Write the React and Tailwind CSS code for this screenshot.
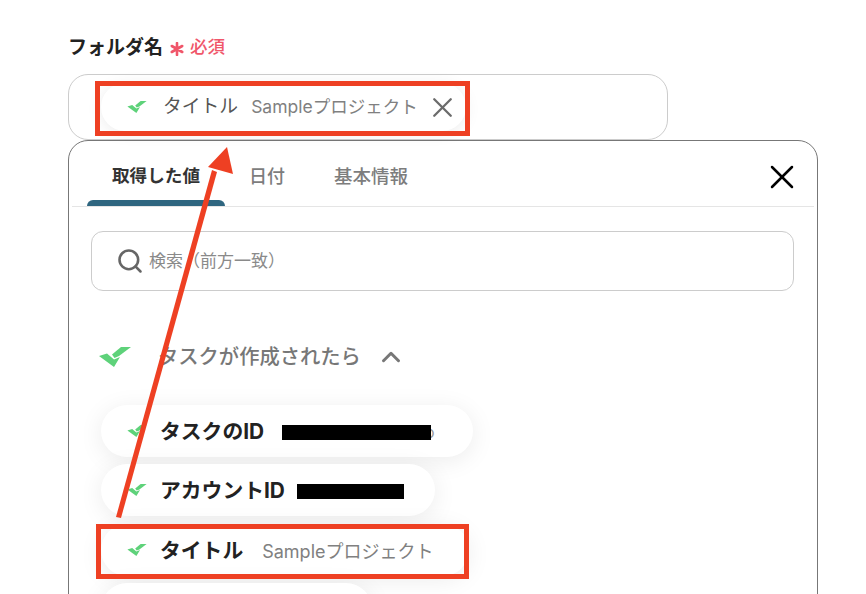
import { Search, X, ChevronUp } from 'lucide-react';

function Check({ className }) {
  return (
    <svg className={className} viewBox="0 0 32 20" fill="#5ed27a">
      <path d="M0 9 L8 6.5 L15 12.5 L21 10 L15 20 Z" />
      <path d="M13 7.5 L22 0 L32 0 L20 9 L15.5 11 Z" />
    </svg>
  );
}

function Row({ label, value, width, mask, maskWidth, maskGap, tail, mb = 'mb-[7px]' }) {
  return (
    <div className={`flex items-center h-[52px] rounded-full bg-white shadow-[0_4px_24px_rgba(0,0,0,0.08)] pl-[26px] ${width} ${mb}`}>
      <Check className="w-[20px] h-[12px] shrink-0" />
      <span className="ml-[13px] mt-[2px] text-[20.8px] font-bold text-[#222] whitespace-nowrap">{label}</span>
      {value && <span className="ml-[19px] mt-[2px] text-[18px] text-[#808080] whitespace-nowrap">{value}</span>}
      {mask && <span className={`relative z-10 h-[15px] mt-[2px] bg-black ${maskGap} ${maskWidth}`} />}
      {tail && <span className="-ml-[6px] mt-[2px] text-[16px] text-[#999]">{tail}</span>}
    </div>
  );
}

export default function App() {
  return (
    <div className="relative w-[866px] h-[594px] overflow-hidden bg-white pt-[34px] pl-[68px] font-['Inter','Noto_Sans_CJK_JP',sans-serif]">
      <div className="flex items-center h-[26px]">
        <span className="text-[19px] font-semibold text-[#222] leading-none">フォルダ名</span>
        <svg className="ml-[7px] mt-[3px] w-[14px] h-[14px]" viewBox="0 0 14 14" stroke="#f0566a" strokeWidth="2.6" strokeLinecap="round">
          <path d="M7 1 V13 M1.8 4 L12.2 10 M12.2 4 L1.8 10" />
        </svg>
        <span className="ml-[6px] text-[17.5px] font-medium text-[#f0566a] leading-none">必須</span>
      </div>

      <div className="mt-[14px] w-[600px] h-[66px] rounded-[20px] border border-[#ccc] flex items-center pl-[32px]">
        <div className="flex items-center w-[365px] h-[48px] rounded-full bg-white shadow-[0_2px_16px_rgba(0,0,0,0.08)] pl-[26px]">
          <Check className="w-[20px] h-[12px] shrink-0" />
          <span className="ml-[16px] text-[18.8px] text-[#555] whitespace-nowrap">タイトル</span>
          <span className="ml-[13px] text-[17.5px] text-[#808080] whitespace-nowrap">Sampleプロジェクト</span>
          <X className="ml-[8px] w-[33px] h-[33px] text-[#6b6b6b] shrink-0" strokeWidth={1.7} />
        </div>
      </div>

      <div className="w-[750px] h-[500px] rounded-t-[20px] border border-[#777] bg-white">
        <div className="relative flex h-[66px] mx-[3px] border-b border-[#e5e5e5] pl-[40px]">
          <div className="relative w-[88px] h-[65px] pt-[6px] flex items-center justify-center text-[17.6px] font-bold text-[#333] whitespace-nowrap">
            取得した値
            <span className="absolute left-[-25px] bottom-0 w-[138px] h-[6px] rounded-t-[6px] bg-[#2f6680]" />
          </div>
          <div className="ml-[49px] h-[65px] pt-[6px] flex items-center text-[18px] font-medium text-[#7d7d7d]">日付</div>
          <div className="ml-[49px] h-[65px] pt-[6px] flex items-center text-[18.5px] font-medium text-[#7d7d7d]">基本情報</div>
          <X className="absolute right-[12px] top-[16px] w-[40px] h-[40px] text-black" strokeWidth={1.5} />
        </div>

        <div className="mt-[24px] ml-[22px] w-[703px] h-[60px] rounded-[12px] border border-[#ccc] flex items-center pl-[24px]">
          <Search className="w-[28px] h-[28px] text-[#666] shrink-0" strokeWidth={2.2} />
          <span className="ml-[5px] mt-[2px] text-[17px] text-[#8a8a8a]">検索（前方一致）</span>
        </div>

        <div className="mt-[47px] ml-[29px] flex items-center h-[38px]">
          <Check className="w-[34px] h-[20px] shrink-0" />
          <span className="ml-[26px] text-[20.3px] font-medium text-[#777] whitespace-nowrap">タスクが作成されたら</span>
          <ChevronUp className="ml-[15px] w-[30px] h-[30px] text-[#777]" strokeWidth={2.4} />
        </div>

        <div className="mt-[29px] ml-[32px]">
          <Row label="タスクのID" width="w-[372px]" mask maskWidth="w-[149px]" maskGap="ml-[18px]" tail="o" />
          <Row label="アカウントID" width="w-[334px]" mask maskWidth="w-[107px]" maskGap="ml-[12px]" mb="mb-[8px]" />
          <Row label="タイトル" value="Sampleプロジェクト" width="w-[368px]" />
          <div className="h-[52px] w-[271px] rounded-full bg-white shadow-[0_4px_24px_rgba(0,0,0,0.08)]" />
        </div>
      </div>

      {/* annotations */}
      <div className="absolute left-[95px] top-[81px] w-[375px] h-[55px] border-[5px] border-[#ee4023]" />
      <div className="absolute left-[96px] top-[524px] w-[373px] h-[55px] border-[5px] border-[#ee4023]" />
      <svg className="absolute left-0 top-0 pointer-events-none" width="866" height="594" fill="#ee4023">
        <path d="M116 517 L212 170 L217 172 L121 518 Z" />
        <path d="M227 147 L233 174 L208 167 Z" />
      </svg>
    </div>
  );
}
